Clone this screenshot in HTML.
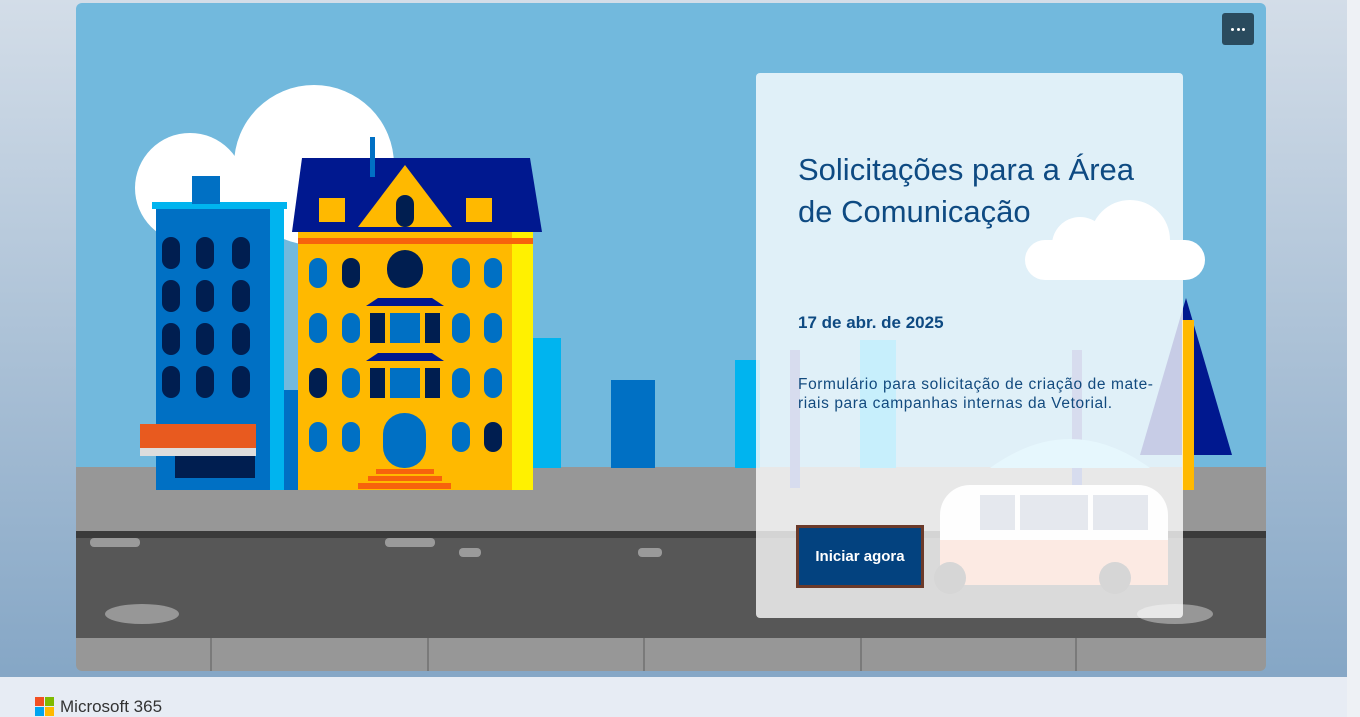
<!DOCTYPE html>
<html><head><meta charset="utf-8"><style>
body{margin:0;width:1360px;height:717px;overflow:hidden;font-family:"Liberation Sans",sans-serif;background:linear-gradient(#d3dde8,#86a7c6 670px);position:relative}
.foot{position:absolute;left:0;top:677px;width:1347px;height:40px;background:#e7ecf4}
.sb{position:absolute;left:1347px;top:0;width:13px;height:717px;background:#eef1f5}
.card{position:absolute;left:76px;top:3px;width:1190px;height:668px;border-radius:6px;overflow:hidden;background:#72b9dd}
.panel{position:absolute;left:756px;top:73px;width:427px;height:545px;background:rgba(255,255,255,.78);border-radius:4px}
.t{position:absolute;left:42px;top:76px;font-size:31px;line-height:42px;color:#0e4a82;width:370px}
.d{position:absolute;left:42px;top:240px;font-size:17px;font-weight:bold;color:#0e4a82}
.desc{position:absolute;left:42px;top:302px;font-size:15.5px;letter-spacing:0.6px;line-height:19px;color:#124a7e;width:380px;white-space:nowrap}
.btn{position:absolute;left:40px;top:452px;width:128px;height:63px;background:#03427f;border:3px solid #6b3a2a;box-sizing:border-box;color:#fff;font-weight:bold;font-size:15px;text-align:center;line-height:57px}
.more{position:absolute;left:1146px;top:10px;width:32px;height:32px;background:#2a4b5e;border-radius:3px}
.more i{position:absolute;top:15px;width:3px;height:3px;background:#fff;border-radius:50%}
</style></head><body>
<div class="card">
<svg width="1190" height="668" viewBox="76 3 1190 668" style="position:absolute;left:0;top:0">
<circle cx="314" cy="165" r="80" fill="#fff"/><circle cx="190" cy="188" r="55" fill="#fff"/>
<g fill="#fff"><rect x="1025" y="240" width="180" height="40" rx="20"/><circle cx="1080" cy="245" r="28"/><circle cx="1130" cy="240" r="40"/></g>
<rect x="76" y="467" width="1190" height="64" fill="#979797"/>
<rect x="76" y="531" width="1190" height="7" fill="#3b3b3b"/>
<rect x="76" y="538" width="1190" height="100" fill="#575757"/>
<rect x="76" y="638" width="1190" height="33" fill="#979797"/>
<g stroke="#7a7a7a" stroke-width="2"><line x1="211" y1="638" x2="211" y2="671"/><line x1="428" y1="638" x2="428" y2="671"/><line x1="644" y1="638" x2="644" y2="671"/><line x1="861" y1="638" x2="861" y2="671"/><line x1="1076" y1="638" x2="1076" y2="671"/></g>
<ellipse cx="142" cy="614" rx="37" ry="10" fill="#979797"/><ellipse cx="1175" cy="614" rx="38" ry="10" fill="#979797"/>
<rect x="459" y="548" width="22" height="9" rx="4" fill="#9a9a9a"/><rect x="638" y="548" width="24" height="9" rx="4" fill="#9a9a9a"/>
<rect x="90" y="538" width="50" height="9" rx="4" fill="#9a9a9a"/><rect x="385" y="538" width="50" height="9" rx="4" fill="#9a9a9a"/>
<rect x="533" y="338" width="28" height="130" fill="#00b4ef"/><rect x="611" y="380" width="44" height="88" fill="#0070c4"/>
<rect x="735" y="360" width="25" height="108" fill="#00b4ef"/>
<rect x="860" y="340" width="36" height="128" fill="#00b4ef"/><rect x="790" y="350" width="10" height="138" fill="#4a5fb0"/><rect x="1072" y="350" width="10" height="138" fill="#4a5fb0"/>
<path d="M990 468 Q1070 410 1150 468Z" fill="#8fdcf5"/>
<rect x="940" y="485" width="228" height="100" rx="30" fill="#f8f8f8"/><rect x="940" y="540" width="228" height="45" fill="#f0a080"/>
<rect x="980" y="495" width="35" height="35" fill="#8898b0"/><rect x="1020" y="495" width="68" height="35" fill="#8898b0"/><rect x="1093" y="495" width="55" height="35" fill="#8898b0"/>
<circle cx="950" cy="578" r="16" fill="#444"/><circle cx="1115" cy="578" r="16" fill="#444"/>
<rect x="156" y="205" width="128" height="285" fill="#0070c4"/><rect x="270" y="205" width="14" height="285" fill="#00b4ef"/>
<rect x="152" y="202" width="135" height="7" fill="#00b4ef"/><rect x="192" y="176" width="28" height="28" fill="#0070c4"/>
<g fill="#001e50"><rect x="162" y="237" width="18" height="32" rx="9"/><rect x="196" y="237" width="18" height="32" rx="9"/><rect x="232" y="237" width="18" height="32" rx="9"/>
<rect x="162" y="280" width="18" height="32" rx="9"/><rect x="196" y="280" width="18" height="32" rx="9"/><rect x="232" y="280" width="18" height="32" rx="9"/>
<rect x="162" y="323" width="18" height="32" rx="9"/><rect x="196" y="323" width="18" height="32" rx="9"/><rect x="232" y="323" width="18" height="32" rx="9"/>
<rect x="162" y="366" width="18" height="32" rx="9"/><rect x="196" y="366" width="18" height="32" rx="9"/><rect x="232" y="366" width="18" height="32" rx="9"/>
<rect x="175" y="455" width="80" height="23"/></g>
<rect x="140" y="424" width="116" height="32" fill="#e85a1f"/><rect x="140" y="448" width="116" height="8" fill="#ddd"/>
<rect x="284" y="390" width="14" height="100" fill="#0070c4"/>
<rect x="298" y="232" width="235" height="258" fill="#ffb900"/><rect x="512" y="232" width="21" height="258" fill="#fff100"/>
<rect x="298" y="238" width="235" height="6" fill="#f7630c"/>
<polygon points="292,232 302,158 530,158 542,232" fill="#00188f"/><rect x="370" y="137" width="5" height="40" fill="#0070c4"/>
<polygon points="358,227 405,165 452,227" fill="#ffb900"/><rect x="396" y="195" width="18" height="32" rx="9" fill="#001e50"/>
<rect x="319" y="198" width="26" height="24" fill="#ffb900"/><rect x="466" y="198" width="26" height="24" fill="#ffb900"/>
<g fill="#0070c4"><rect x="309" y="258" width="18" height="30" rx="9"/><rect x="452" y="258" width="18" height="30" rx="9"/><rect x="484" y="258" width="18" height="30" rx="9"/>
<rect x="309" y="313" width="18" height="30" rx="9"/><rect x="342" y="313" width="18" height="30" rx="9"/><rect x="452" y="313" width="18" height="30" rx="9"/><rect x="484" y="313" width="18" height="30" rx="9"/>
<rect x="342" y="368" width="18" height="30" rx="9"/><rect x="452" y="368" width="18" height="30" rx="9"/><rect x="484" y="368" width="18" height="30" rx="9"/>
<rect x="309" y="422" width="18" height="30" rx="9"/><rect x="342" y="422" width="18" height="30" rx="9"/><rect x="452" y="422" width="18" height="30" rx="9"/>
<rect x="383" y="413" width="43" height="55" rx="21"/><rect x="390" y="313" width="30" height="30"/><rect x="390" y="368" width="30" height="30"/></g>
<g fill="#001e50"><rect x="342" y="258" width="18" height="30" rx="9"/><rect x="387" y="250" width="36" height="38" rx="18"/><rect x="309" y="368" width="18" height="30" rx="9"/><rect x="484" y="422" width="18" height="30" rx="9"/>
<rect x="370" y="313" width="15" height="30"/><rect x="425" y="313" width="15" height="30"/><rect x="370" y="368" width="15" height="30"/><rect x="425" y="368" width="15" height="30"/></g>
<polygon points="366,306 378,298 432,298 444,306" fill="#00188f"/><polygon points="366,361 378,353 432,353 444,361" fill="#00188f"/>
<g fill="#f7630c"><rect x="376" y="469" width="58" height="5"/><rect x="368" y="476" width="74" height="5"/><rect x="358" y="483" width="93" height="6"/></g>
<polygon points="1186,298 1232,455 1140,455" fill="#00188f"/><rect x="1182" y="320" width="12" height="170" fill="#ffb900"/>
</svg>
<div class="more"><i style="left:9px"></i><i style="left:14.5px"></i><i style="left:20px"></i></div>
</div>
<div class="panel">
<div class="t">Solicitações para a Área de Comunicação</div>
<div class="d">17 de abr. de 2025</div>
<div class="desc">Formulário para solicitação de criação de mate-<br>riais para campanhas internas da Vetorial.</div>
<div class="btn">Iniciar agora</div>
</div>
<div class="foot">
<svg width="20" height="20" style="position:absolute;left:35px;top:20px"><rect width="9" height="9" fill="#f25022"/><rect x="10" width="9" height="9" fill="#7fba00"/><rect y="10" width="9" height="9" fill="#00a4ef"/><rect x="10" y="10" width="9" height="9" fill="#ffb900"/></svg>
<div style="position:absolute;left:60px;top:20px;font-size:17px;color:#333">Microsoft 365</div>
</div>
<div class="sb"></div>
</body></html>
